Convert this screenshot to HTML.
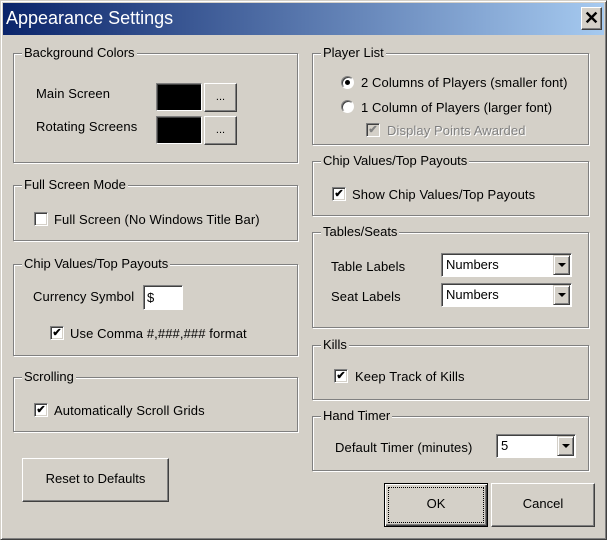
<!DOCTYPE html>
<html><head><meta charset="utf-8"><style>
*{box-sizing:border-box;margin:0;padding:0}
body{width:607px;height:540px;overflow:hidden;background:#d4d0c8;font-family:"Liberation Sans",sans-serif;font-size:13px;color:#000;position:relative}
.win{position:absolute;left:0;top:0;width:607px;height:540px;border:1px solid;border-color:#d4d0c8 #404040 #404040 #d4d0c8;box-shadow:inset 1px 1px 0 #fff,inset -1px -1px 0 #808080}
.title{position:absolute;left:3px;top:3px;width:601px;height:32px;background:linear-gradient(90deg,#0a246a,#a6caf0);color:#fff;font-size:18px;padding:5px 0 0 3px}
.close{position:absolute;left:581px;top:7px;width:21px;height:23px;background:#d4d0c8;border:1px solid;border-color:#fff #404040 #404040 #fff;box-shadow:inset -1px -1px 0 #808080;color:#000;font-size:18px;font-weight:bold;text-align:center;line-height:20px}
.a{position:absolute;white-space:nowrap;letter-spacing:0.1px}
.g{position:absolute;border:1px solid #808080;box-shadow:1px 1px 0 #fff,inset 1px 1px 0 #fff}
.g .l{position:absolute;left:8px;top:-9px;background:#d4d0c8;padding:0 2px;line-height:16px}
.cb{position:absolute;width:14px;height:14px;background:#fff;border:1px solid;border-color:#808080 #fff #fff #808080;box-shadow:inset 1px 1px 0 #404040,inset -1px -1px 0 #d4d0c8;font-size:11px;line-height:12px;text-align:center;font-weight:bold}
.cb.d{background:#d4d0c8;color:#808080}
.rb{position:absolute;width:13px;height:13px;border-radius:50%;background:#fff;border:1px solid;border-color:#808080 #fff #fff #808080;box-shadow:inset 1px 1px 0 #404040}
.rb.on::after{content:"";position:absolute;left:3px;top:3px;width:5px;height:5px;border-radius:50%;background:#000}
.btn{position:absolute;background:#d4d0c8;border:1px solid;border-color:#fff #404040 #404040 #fff;box-shadow:inset -1px -1px 0 #808080;text-align:center}
.sunk{position:absolute;background:#fff;border:1px solid;border-color:#808080 #fff #fff #808080;box-shadow:inset 1px 1px 0 #404040}
.combo .arr{position:absolute;right:1px;top:1px;bottom:1px;width:17px;background:#d4d0c8;border:1px solid;border-color:#d4d0c8 #404040 #404040 #d4d0c8;box-shadow:inset 1px 1px 0 #fff,inset -1px -1px 0 #808080}
.combo .arr::after{content:"";position:absolute;left:4px;top:7px;border:4px solid transparent;border-top:4px solid #000;border-bottom:0}
.combo span{position:absolute;left:4px;top:3px}
</style></head><body>
<div class="win"></div>
<div class="title">Appearance Settings</div>
<div class="close">✕</div>

<div class="g" style="left:13px;top:53px;width:285px;height:110px"><span class="l">Background Colors</span></div>
<span class="a" style="left:36px;top:86px">Main Screen</span>
<span class="a" style="left:36px;top:119px">Rotating Screens</span>
<div class="sunk" style="left:156px;top:83px;width:46px;height:28px;background:#000"></div>
<div class="btn" style="left:204px;top:83px;width:33px;height:29px;font-size:11px;line-height:26px">...</div>
<div class="sunk" style="left:156px;top:116px;width:46px;height:28px;background:#000"></div>
<div class="btn" style="left:204px;top:116px;width:33px;height:29px;font-size:11px;line-height:26px">...</div>

<div class="g" style="left:13px;top:185px;width:285px;height:56px"><span class="l">Full Screen Mode</span></div>
<div class="cb" style="left:34px;top:212px"></div>
<span class="a" style="left:54px;top:212px">Full Screen (No Windows Title Bar)</span>

<div class="g" style="left:13px;top:264px;width:285px;height:92px"><span class="l">Chip Values/Top Payouts</span></div>
<span class="a" style="left:33px;top:289px">Currency Symbol</span>
<div class="sunk" style="left:143px;top:285px;width:40px;height:25px"><span class="a" style="left:3px;top:4px">$</span></div>
<div class="cb" style="left:50px;top:326px">✔</div>
<span class="a" style="left:70px;top:326px">Use Comma #,###,### format</span>

<div class="g" style="left:13px;top:377px;width:285px;height:55px"><span class="l">Scrolling</span></div>
<div class="cb" style="left:34px;top:403px">✔</div>
<span class="a" style="left:54px;top:403px">Automatically Scroll Grids</span>

<div class="btn" style="left:22px;top:458px;width:147px;height:44px;line-height:40px">Reset to Defaults</div>

<div class="g" style="left:312px;top:53px;width:277px;height:92px"><span class="l">Player List</span></div>
<div class="rb on" style="left:341px;top:76px"></div>
<span class="a" style="left:361px;top:75px">2 Columns of Players (smaller font)</span>
<div class="rb" style="left:341px;top:100px"></div>
<span class="a" style="left:361px;top:100px">1 Column of Players (larger font)</span>
<div class="cb d" style="left:366px;top:123px">✔</div>
<span class="a" style="left:387px;top:123px;color:#808080;text-shadow:1px 1px 0 #fff">Display Points Awarded</span>

<div class="g" style="left:312px;top:161px;width:277px;height:55px"><span class="l">Chip Values/Top Payouts</span></div>
<div class="cb" style="left:332px;top:187px">✔</div>
<span class="a" style="left:352px;top:187px">Show Chip Values/Top Payouts</span>

<div class="g" style="left:312px;top:232px;width:277px;height:96px"><span class="l">Tables/Seats</span></div>
<span class="a" style="left:331px;top:259px">Table Labels</span>
<div class="sunk combo" style="left:441px;top:253px;width:131px;height:24px"><span>Numbers</span><div class="arr"></div></div>
<span class="a" style="left:331px;top:289px">Seat Labels</span>
<div class="sunk combo" style="left:441px;top:283px;width:131px;height:24px"><span>Numbers</span><div class="arr"></div></div>

<div class="g" style="left:312px;top:345px;width:277px;height:55px"><span class="l">Kills</span></div>
<div class="cb" style="left:334px;top:369px">✔</div>
<span class="a" style="left:355px;top:369px">Keep Track of Kills</span>

<div class="g" style="left:312px;top:416px;width:277px;height:55px"><span class="l">Hand Timer</span></div>
<span class="a" style="left:335px;top:440px">Default Timer (minutes)</span>
<div class="sunk combo" style="left:496px;top:434px;width:80px;height:24px"><span>5</span><div class="arr"></div></div>

<div class="btn" style="left:384px;top:483px;width:104px;height:44px;line-height:40px;border:1px solid #000;box-shadow:inset 1px 1px 0 #fff,inset -1px -1px 0 #404040,inset -2px -2px 0 #808080"><span style="outline:1px dotted #000;display:inline-block;position:absolute;left:4px;top:4px;right:4px;bottom:4px;line-height:32px">OK</span></div>
<div class="btn" style="left:491px;top:483px;width:104px;height:44px;line-height:40px">Cancel</div>
</body></html>
